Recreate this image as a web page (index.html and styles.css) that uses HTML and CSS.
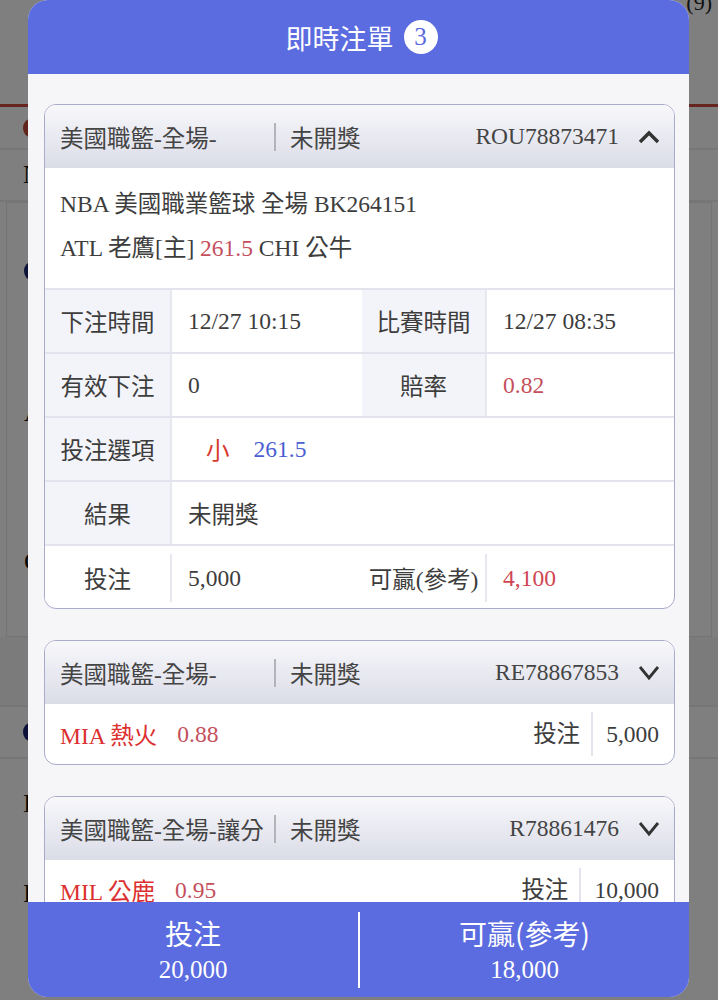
FILE: index.html
```html
<!DOCTYPE html>
<html lang="zh-Hant">
<head>
	<meta charset="UTF-8">
	<title>即時注單</title>
	<link rel="stylesheet" href="styles.css">
</head>
<body>
	<!-- page behind the dialog -->
	<div class="page">
		<div class="topbar">
			<span class="count">(9)</span>
		</div>
		<ul class="rows">
			<li class="row-tab"><i class="dot red"></i></li>
			<li><b>N</b></li>
			<li class="row-big"><i class="dot navy"></i><b>A</b><b>C</b></li>
			<li class="row-gap"></li>
			<li><i class="dot navy"></i></li>
			<li class="row-tall"><b>I</b></li>
			<li class="row-tall"><b>I</b></li>
		</ul>
	</div>
	<div class="mask"></div>

	<div class="modal">
		<div class="modal-head">
			<span>即時注單</span>
			<span class="badge">3</span>
		</div>

		<div class="modal-body">
			<div class="card">
				<div class="card-head">
					<span class="type">美國職籃-全場-</span>
					<i class="sep"></i>
					<span>未開獎</span>
					<span class="no">ROU78873471</span>
					<svg class="chev" viewBox="0 0 22 14"><polyline points="2,12 11,3 20,12" /></svg>
				</div>
				<div class="info">
					<p>NBA 美國職業籃球 全場 BK264151</p>
					<p>ATL 老鷹[主] <span class="odds">261.5</span> CHI 公牛</p>
				</div>
				<div class="grid-row">
					<div class="lbl">下注時間</div>
					<div class="val">12/27 10:15</div>
					<div class="lbl">比賽時間</div>
					<div class="val">12/27 08:35</div>
				</div>
				<div class="grid-row">
					<div class="lbl">有效下注</div>
					<div class="val">0</div>
					<div class="lbl">賠率</div>
					<div class="val odds">0.82</div>
				</div>
				<div class="grid-row">
					<div class="lbl">投注選項</div>
					<div class="val wide"><span class="pick">小</span><span class="line">261.5</span></div>
				</div>
				<div class="grid-row">
					<div class="lbl">結果</div>
					<div class="val wide">未開獎</div>
				</div>
				<div class="grid-row total">
					<div class="lbl">投注</div>
					<div class="val">5,000</div>
					<div class="lbl">可贏(參考)</div>
					<div class="val win">4,100</div>
				</div>
			</div>

			<div class="card">
				<div class="card-head">
					<span class="type">美國職籃-全場-</span>
					<i class="sep"></i>
					<span>未開獎</span>
					<span class="no">RE78867853</span>
					<svg class="chev down" viewBox="0 0 22 17"><polyline points="2,3 11,14 20,3" /></svg>
				</div>
				<div class="bet">
					<span class="team">MIA 熱火</span>
					<span class="odds">0.88</span>
					<span class="stake">投注</span>
					<span class="amount">5,000</span>
				</div>
			</div>

			<div class="card">
				<div class="card-head">
					<span class="type">美國職籃-全場-讓分</span>
					<i class="sep"></i>
					<span>未開獎</span>
					<span class="no">R78861476</span>
					<svg class="chev down" viewBox="0 0 22 17"><polyline points="2,3 11,14 20,3" /></svg>
				</div>
				<div class="bet">
					<span class="team">MIL 公鹿</span>
					<span class="odds">0.95</span>
					<span class="stake">投注</span>
					<span class="amount">10,000</span>
				</div>
			</div>
		</div>

		<div class="modal-foot">
			<div class="sum">
				<span class="sum-label">投注</span>
				<span class="sum-value">20,000</span>
			</div>
			<div class="sum">
				<span class="sum-label">可贏(參考)</span>
				<span class="sum-value">18,000</span>
			</div>
		</div>
	</div>
</body>
</html>
```

FILE: styles.css
```css
*{
	margin: 0;
	padding: 0;
	box-sizing: border-box;
}
ul{
	list-style: none;
}
body{
	width: 718px;
	height: 1000px;
	overflow: hidden;
	font-family: "Liberation Serif", "Noto Sans CJK TC", serif;
	font-size: 23.5px;
	color: #3d3d3d;
	background: #fff;
}

/* background page */
.page{
	height: 1000px;
	background: #fafafa;
}
.topbar{
	height: 107px;
	display: flex;
	justify-content: flex-end;
	border-bottom: 3px solid #c8493c;
}
.count{
	margin-top: -10px;
	margin-right: 6px;
	font-size: 22px;
	color: #222;
}
.rows>li{
	height: 52px;
	display: flex;
	flex-direction: column;
	justify-content: center;
	padding-left: 23px;
	border-bottom: 2px solid #e8e8e8;
}
.rows>li.row-tab{
	height: 43px;
}
.rows>li.row-big{
	height: 435px;
	justify-content: space-around;
	margin: 0 6px;
	padding-left: 17px;
	border: 1px solid #e4e4e4;
}
.rows>li.row-gap{
	height: 50px;
	background: #f1f1f1;
}
.rows>li.row-big+li{
	height: 70px;
}
.rows>li.row-tall{
	height: 90px;
	border-bottom: none;
}
.rows b{
	font-weight: normal;
	font-size: 26px;
	color: #111;
}
.dot{
	width: 14px;
	height: 18px;
	border-radius: 50%;
}
.dot.red{
	background: #c04a3a;
}
.dot.navy{
	background: #1b2570;
}
.mask{
	position: fixed;
	left: 0;
	top: 0;
	width: 100%;
	height: 100%;
	background: rgba(0, 0, 0, 0.49);
}

/* dialog */
.modal{
	position: fixed;
	left: 28px;
	top: 0;
	width: 661px;
	height: 997px;
	border-radius: 20px;
	overflow: hidden;
	display: flex;
	flex-direction: column;
	background: #f6f6f8;
}
.modal-head{
	height: 74px;
	flex-shrink: 0;
	display: flex;
	align-items: center;
	justify-content: center;
	gap: 10px;
	padding-left: 6px;
	background: #5b6be0;
	color: #fff;
	font-family: "Noto Sans CJK TC", sans-serif;
	font-size: 27px;
}
.badge{
	width: 34px;
	height: 34px;
	border-radius: 50%;
	background: #fff;
	color: #5b6be0;
	font-family: "Liberation Serif", serif;
	font-size: 25px;
	display: flex;
	align-items: center;
	justify-content: center;
}
.modal-body{
	flex: 1;
	overflow: hidden;
	display: flex;
	flex-direction: column;
	gap: 31px;
	padding: 30px 14px 0 16px;
}
.card{
	flex-shrink: 0;
	background: #fff;
	border: 1.5px solid #a8abc9;
	border-radius: 12px;
	overflow: hidden;
}
.card-head{
	height: 63px;
	display: flex;
	align-items: center;
	padding: 0 14px 0 15px;
	background: linear-gradient(#f8f8fb, #dadce7);
	color: #444;
}
.type{
	width: 214px;
	white-space: nowrap;
}
.sep{
	width: 2px;
	height: 28px;
	margin-right: 14px;
	background: #b3b4b9;
}
.no{
	margin-left: auto;
	margin-right: 19px;
}
.chev{
	width: 22px;
	height: 14px;
	fill: none;
	stroke: #333;
	stroke-width: 3.4;
}
.chev.down{
	height: 17px;
	stroke-width: 2.8;
}
.info{
	padding: 14px 15px 18px;
	line-height: 44px;
}
.odds{
	color: #c4505c;
}

/* detail table */
.grid-row{
	height: 64px;
	display: grid;
	grid-template-columns: 125px 192px 123px 1fr;
	border-top: 2px solid #e2e3ec;
}
.lbl{
	display: flex;
	align-items: center;
	justify-content: center;
	background: #f3f4f9;
	white-space: nowrap;
}
.val{
	display: flex;
	align-items: center;
	padding-left: 16px;
	border-left: 2px solid #e6e7ef;
}
.val.wide{
	grid-column: span 3;
}
.pick{
	margin-left: 18px;
	margin-right: 24px;
	color: #d8392b;
}
.line{
	color: #4b5ed2;
}
.grid-row.total{
	padding: 8px 0 6px;
}
.grid-row.total .lbl{
	background: #fff;
}
.val.win{
	color: #cf4652;
}

/* collapsed cards */
.bet{
	height: 60px;
	display: flex;
	align-items: center;
	padding: 0 15px;
}
.team{
	color: #dc3030;
}
.bet .odds{
	margin-left: 20px;
}
.stake{
	margin-left: auto;
	padding-right: 11px;
	line-height: 44px;
	border-right: 2px solid #e3e4ed;
}
.amount{
	padding-left: 13px;
}

/* totals */
.modal-foot{
	height: 95px;
	flex-shrink: 0;
	display: grid;
	grid-template-columns: 330px 1fr;
	padding: 10px 0 11px;
	background: #5b6be0;
	color: #fff;
}
.sum{
	display: flex;
	flex-direction: column;
	align-items: center;
	padding-top: 3px;
}
.sum+.sum{
	border-left: 2px solid #fff;
}
.sum-label{
	line-height: 37px;
	font-family: "Noto Sans CJK TC", sans-serif;
	font-size: 28px;
}
.sum-value{
	line-height: 36px;
	font-size: 25px;
}
```
